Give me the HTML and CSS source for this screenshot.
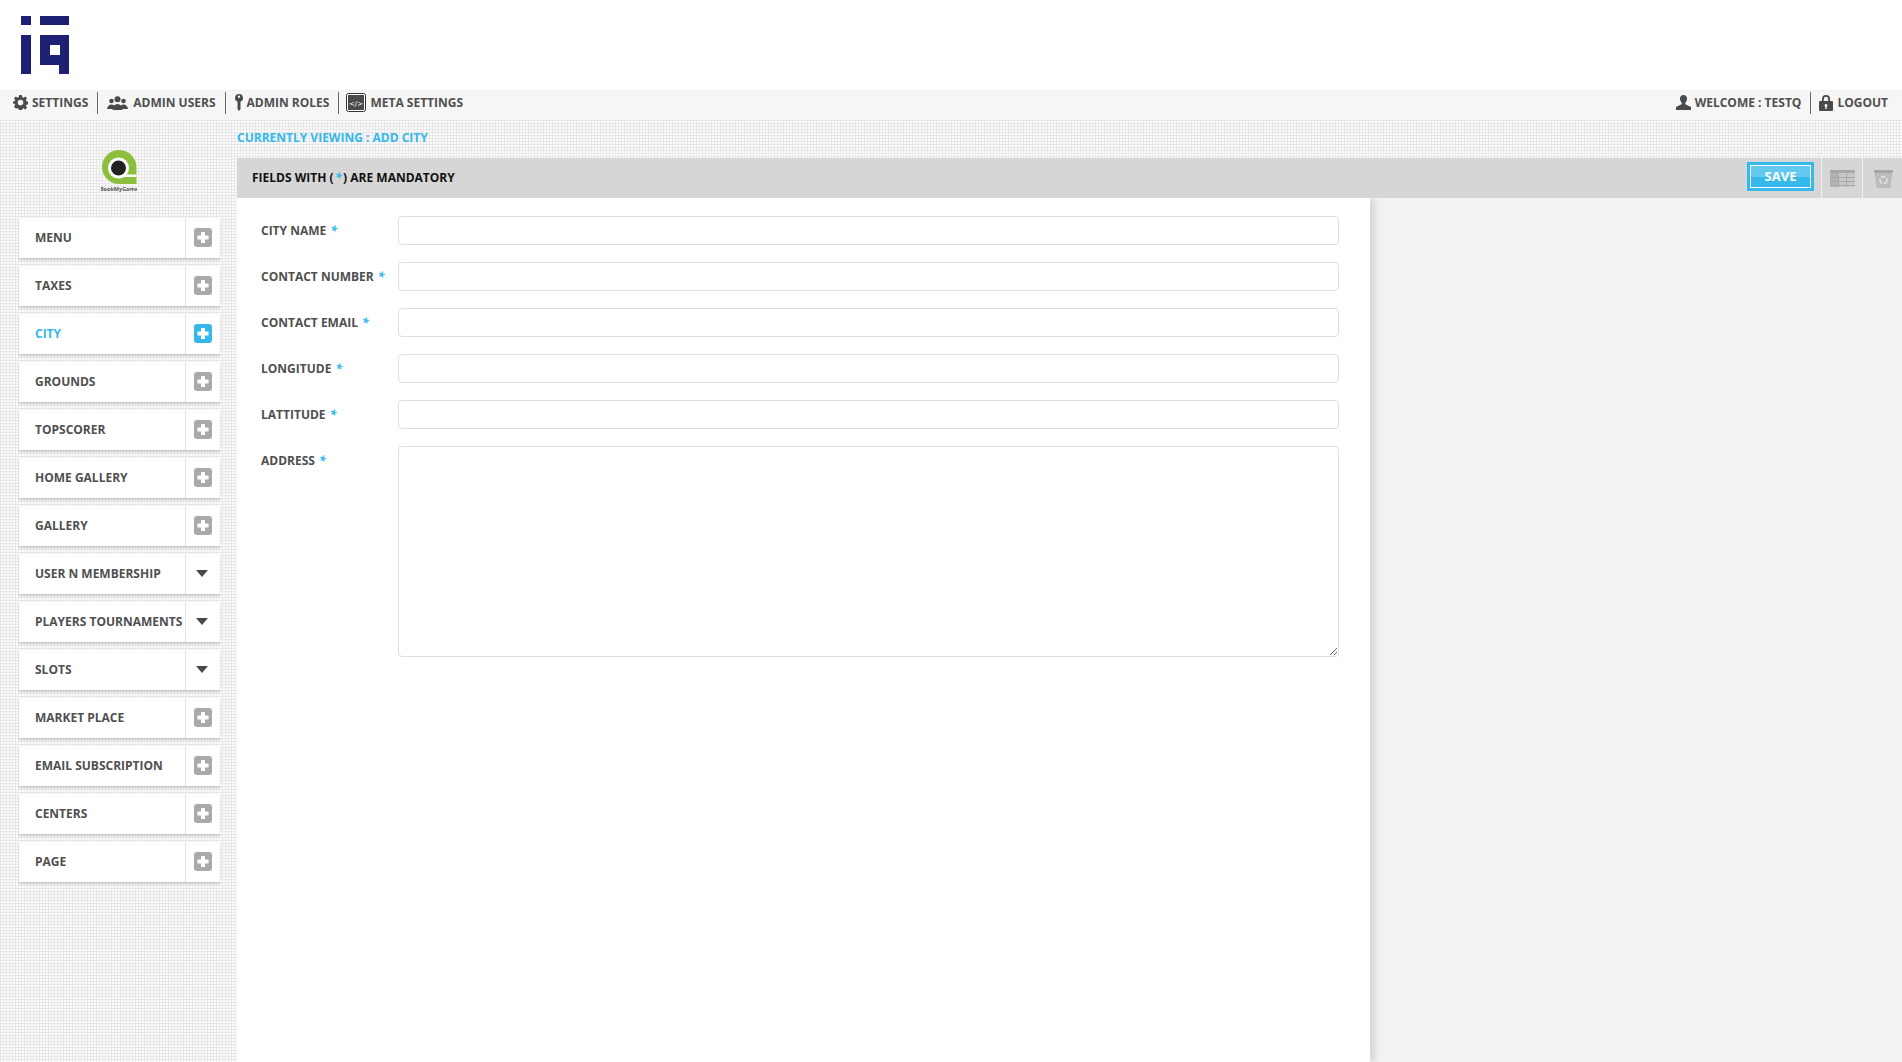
FILE: index.html
```html
<!DOCTYPE html>
<html lang="en">
<head>
<meta charset="utf-8">
<title>Add City</title>
<link rel="stylesheet" href="styles.css">
</head>
<body>
<svg width="0" height="0" class="defs">
  <symbol id="plus" viewBox="0 0 18 19"><rect width="18" height="19" rx="3" fill="currentColor"/><path d="M7 4h4v3.500h3.500v4H11V15H7v-3.500H3.500v-4H7z" fill="#fff"/></symbol>
  <symbol id="caret" viewBox="0 0 12 7"><path d="M0 0h12L6 7z" fill="#4a4a4a"/></symbol>
</svg>
<header class="brand">
  <svg class="brand-logo" width="48" height="58" viewBox="0 0 48 58"><path fill="#1e2074" d="M0 0h10v9H0zM19 0h29v9H19zM0 19h10v40H0zM19 19h29v40H38V49H19zM29 29v10h10V29z" fill-rule="evenodd"/></svg>
</header>
<nav class="topnav">
  <ul class="nav-group">
    <li class="nav-item"><svg width="15" height="15" viewBox="0 0 16 16"><path fill="#4a4a4a" fill-rule="evenodd" d="M6.600 0h2.800l.4 2.200 1.400.6L13 1.500l2 2-1.300 1.800.6 1.400 2.200.4v2.800l-2.200.4-.6 1.400 1.300 1.800-2 2-1.800-1.300-1.400.6-.4 2.200H6.600l-.4-2.200-1.400-.6L3 14.500l-2-2 1.300-1.800-.6-1.400L-.5 9V7l2.200-.4.600-1.400L1 3.500l2-2 1.800 1.300 1.400-.6zM8 5a3 3 0 1 0 0 6 3 3 0 0 0 0-6z"/></svg>SETTINGS</li>
    <li class="nav-item nav-item-users"><svg width="21" height="14" viewBox="0 0 21 14"><g fill="#4a4a4a"><circle cx="4.500" cy="5" r="2.300"/><circle cx="16.500" cy="5" r="2.300"/><path d="M0 13c.5-3 2-4.500 4.500-4.500S8 10 8 13zM13 13c0-3 1-4.500 3.500-4.500S20.500 10 21 13z"/><circle cx="10.500" cy="3.300" r="3"/><path d="M5.500 14c.5-4 2-6 5-6s4.500 2 5 6z"/></g></svg>ADMIN USERS</li>
    <li class="nav-item"><svg width="8" height="17" viewBox="0 0 8 17"><path fill="#4a4a4a" fill-rule="evenodd" d="M4 0a4 4 0 0 1 1.500 7.700V15L4 17l-1.500-2V7.700A4 4 0 0 1 4 0zm0 1.500a1.200 1.200 0 1 0 0 2.400 1.200 1.200 0 0 0 0-2.400z"/></svg>ADMIN ROLES</li>
    <li class="nav-item nav-item-code"><svg class="code-icon" width="20" height="19" viewBox="0 0 20 19"><rect x=".5" y=".5" width="19" height="18" rx="2" fill="#fff" stroke="#333"/><rect x="2" y="2" width="16" height="15" fill="#4a4a4a"/><text x="10" y="12.500" class="code-text">&lt;/&gt;</text></svg>META SETTINGS</li>
  </ul>
  <ul class="nav-group">
    <li class="nav-item"><svg width="15" height="15" viewBox="0 0 15 15"><path fill="#4a4a4a" d="M7.500 0c2.200 0 3.500 1.500 3.500 3.800 0 1.700-.8 3-1.700 3.900v1.500L15 12v3H0v-3l5.700-2.800V7.700C4.800 6.800 4 5.500 4 3.800 4 1.500 5.300 0 7.500 0z"/></svg>WELCOME : TESTQ</li>
    <li class="nav-item nav-item-logout"><svg width="14" height="16" viewBox="0 0 14 16"><path fill="#4a4a4a" fill-rule="evenodd" d="M3 6V4a4 4 0 0 1 8 0v2h2a1 1 0 0 1 1 1v8a1 1 0 0 1-1 1H1a1 1 0 0 1-1-1V7a1 1 0 0 1 1-1zm1.800 0h4.400V4a2.200 2.200 0 0 0-4.400 0zM7 9a1.500 1.500 0 0 0-.7 2.800V14h1.400v-2.200A1.500 1.500 0 0 0 7 9z"/></svg>LOGOUT</li>
  </ul>
</nav>
<div class="layout">
  <aside class="sidebar">
    <div class="client-logo">
      <svg width="36" height="42" viewBox="0 0 36 42"><path fill="#8dbf3f" d="M18 0a17.500 17.500 0 0 1 17.500 17.500V34H18a17 17 0 0 1 0-34z"/><circle cx="17.500" cy="18" r="10.500" fill="#fff"/><path fill="#fff" d="M18 24.500h17.500v2.500H18z"/><circle cx="17.500" cy="18" r="7.500" fill="#222"/><text x="18" y="40.500" class="client-text">BookMyGame</text></svg>
    </div>
    <ul class="menu">
      <li class="menu-item"><span class="menu-label">MENU</span><span class="menu-toggle"><svg width="18" height="19"><use href="#plus"/></svg></span></li>
      <li class="menu-item"><span class="menu-label">TAXES</span><span class="menu-toggle"><svg width="18" height="19"><use href="#plus"/></svg></span></li>
      <li class="menu-item is-active"><span class="menu-label">CITY</span><span class="menu-toggle"><svg width="18" height="19"><use href="#plus"/></svg></span></li>
      <li class="menu-item"><span class="menu-label">GROUNDS</span><span class="menu-toggle"><svg width="18" height="19"><use href="#plus"/></svg></span></li>
      <li class="menu-item"><span class="menu-label">TOPSCORER</span><span class="menu-toggle"><svg width="18" height="19"><use href="#plus"/></svg></span></li>
      <li class="menu-item"><span class="menu-label">HOME GALLERY</span><span class="menu-toggle"><svg width="18" height="19"><use href="#plus"/></svg></span></li>
      <li class="menu-item"><span class="menu-label">GALLERY</span><span class="menu-toggle"><svg width="18" height="19"><use href="#plus"/></svg></span></li>
      <li class="menu-item"><span class="menu-label">USER N MEMBERSHIP</span><span class="menu-toggle"><svg class="caret" width="12" height="7"><use href="#caret"/></svg></span></li>
      <li class="menu-item"><span class="menu-label">PLAYERS TOURNAMENTS</span><span class="menu-toggle"><svg class="caret" width="12" height="7"><use href="#caret"/></svg></span></li>
      <li class="menu-item"><span class="menu-label">SLOTS</span><span class="menu-toggle"><svg class="caret" width="12" height="7"><use href="#caret"/></svg></span></li>
      <li class="menu-item"><span class="menu-label">MARKET PLACE</span><span class="menu-toggle"><svg width="18" height="19"><use href="#plus"/></svg></span></li>
      <li class="menu-item"><span class="menu-label">EMAIL SUBSCRIPTION</span><span class="menu-toggle"><svg width="18" height="19"><use href="#plus"/></svg></span></li>
      <li class="menu-item"><span class="menu-label">CENTERS</span><span class="menu-toggle"><svg width="18" height="19"><use href="#plus"/></svg></span></li>
      <li class="menu-item"><span class="menu-label">PAGE</span><span class="menu-toggle"><svg width="18" height="19"><use href="#plus"/></svg></span></li>
    </ul>
  </aside>
  <main class="main">
    <div class="crumb">CURRENTLY VIEWING : ADD CITY</div>
    <div class="toolbar">
      <div class="toolbar-note">FIELDS WITH (<span class="req req-note">*</span>) ARE MANDATORY</div>
      <button class="save-btn" type="button"><span class="save-inner">SAVE</span></button>
      <div class="tool-cell"><svg width="25" height="17" viewBox="0 0 25 17"><rect width="25" height="17" fill="#c8c8c8"/><rect width="25" height="3" fill="#a8a8a8"/><rect y="3" width="8" height="14" fill="#b4b4b4"/><path stroke="#a8a8a8" d="M0 7.500h25M0 11.500h25M0 15.500h25M8.500 0v17M16.500 0v17" fill="none"/></svg></div>
      <div class="tool-cell tool-cell-trash"><svg width="19" height="18" viewBox="0 0 19 18"><path fill="#a6a6a6" d="M0 0h19v2.500h-1L16 18H3L1 2.500H0z"/><path fill="#bcbcbc" d="M1.500 3h16L16 18H3z"/><circle cx="9.500" cy="10" r="3.500" fill="none" stroke="#e4e4e4" stroke-width="1.500" stroke-dasharray="5 1.500"/></svg></div>
    </div>
    <div class="content">
      <form class="panel">
        <div class="field"><label class="field-label">CITY NAME <span class="req">*</span></label><input class="field-input" type="text"></div>
        <div class="field"><label class="field-label">CONTACT NUMBER <span class="req">*</span></label><input class="field-input" type="text"></div>
        <div class="field"><label class="field-label">CONTACT EMAIL <span class="req">*</span></label><input class="field-input" type="text"></div>
        <div class="field"><label class="field-label">LONGITUDE <span class="req">*</span></label><input class="field-input" type="text"></div>
        <div class="field"><label class="field-label">LATTITUDE <span class="req">*</span></label><input class="field-input" type="text"></div>
        <div class="field"><label class="field-label">ADDRESS <span class="req">*</span></label><textarea class="field-input field-area"></textarea></div>
      </form>
    </div>
  </main>
</div>
</body>
</html>
```
FILE: styles.css
```css
* { box-sizing: border-box; }
html, body { margin: 0; height: 100%; }
body {
  height: 1062px;
  overflow: hidden;
  display: flex;
  flex-direction: column;
  font-family: "Open Sans", "Liberation Sans", sans-serif;
  font-weight: 700;
  font-size: 12px;
  color: #4f4f4f;
  background-color: #fbfbfb;
  background-image:
    linear-gradient(#e8e8e8 1px, transparent 1px),
    linear-gradient(90deg, #e8e8e8 1px, transparent 1px);
  background-size: 3px 3px;
}
ul { list-style: none; margin: 0; padding: 0; }
.defs { position: absolute; }

.brand { height: 90px; flex: none; background: #fff; padding: 16px 0 0 21px; }
.brand-logo { display: block; }

.topnav {
  height: 30px;
  flex: none;
  display: flex;
  justify-content: space-between;
  align-items: flex-start;
  padding: 1px 5px 0 4px;
  background: #f6f6f6;
  border-top: 1px solid #f0f0f0;
}
.nav-group { display: flex; align-items: center; }
.nav-item {
  display: flex;
  align-items: center;
  gap: 4px;
  height: 22px;
  padding: 0 9px 1px;
  border-right: 1px solid #666;
  white-space: nowrap;
}
.nav-item:last-child { border-right: 0; }
.nav-item-users { gap: 5px; }
.nav-item-code { padding-left: 7px; }
.nav-item-logout { padding-left: 8px; }
.code-text { fill: #fff; font-size: 7px; font-weight: 400; text-anchor: middle; font-family: "DejaVu Sans", sans-serif; }

.layout { flex: 1; display: flex; min-height: 0; }
.sidebar { width: 237px; flex: none; padding: 30px 0 0 19px; }
.client-logo { height: 68px; padding-left: 82px; }
.client-logo svg { display: block; }
.client-text { font-size: 5.500px; font-weight: 700; fill: #555; text-anchor: middle; }

.menu { width: 201px; display: flex; flex-direction: column; gap: 8px; }
.menu-item {
  height: 40px;
  display: flex;
  background: #fff;
  box-shadow: 0 2px 2px #c9c9c9;
}
.menu-label { flex: 1; padding-left: 16px; line-height: 39px; white-space: nowrap; }
.menu-toggle {
  width: 35px;
  flex: none;
  display: flex;
  align-items: center;
  justify-content: center;
  color: #a9a9a9;
  border-left: 1px solid #e4e4e4;
  padding-bottom: 2px;
}
.menu-toggle svg { display: block; }
.menu-toggle .caret { margin-right: 2px; }
.is-active .menu-label { color: #35b8ea; }
.is-active .menu-toggle { color: #35b8ea; }

.main { flex: 1; display: flex; flex-direction: column; min-width: 0; }
.crumb { height: 38px; padding-top: 9px; line-height: 17px; color: #35b8ea; }
.toolbar {
  height: 40px;
  flex: none;
  display: flex;
  align-items: stretch;
  background: #d6d6d6;
}
.toolbar-note { flex: 1; padding-left: 15px; line-height: 39px; color: #111; }
.req { color: #35b8ea; font-style: italic; margin-left: 1px; }
.req-note { margin: 0 1.500px; }
.save-btn {
  align-self: flex-start;
  width: 67px;
  height: 29px;
  margin: 4px 7px 0 0;
  padding: 0;
  border: 3px solid #35b8ea;
  background: #35b8ea;
  font: inherit;
  font-size: 13px;
  color: #fff;
}
.save-inner {
  display: block;
  height: 100%;
  line-height: 20px;
  border: 1px solid #fff;
  background: linear-gradient(#63c9ef 50%, #35b8ea 50%);
}
.tool-cell {
  width: 41px;
  display: flex;
  align-items: center;
  justify-content: center;
  border-left: 1px solid #f0f0f0;
  padding-top: 1px;
}
.tool-cell-trash { width: 40px; padding-left: 2px; }

.content { flex: 1; min-height: 0; display: flex; background: #f2f2f2; }
.panel {
  width: 1133px;
  background: #fff;
  box-shadow: 7px 0 5px -1px #dadada;
  padding: 18px 31px 0 24px;
  display: flex;
  flex-direction: column;
  gap: 17px;
}
.field { display: flex; align-items: flex-start; }
.field-label { width: 137px; flex: none; line-height: 29px; white-space: nowrap; }
.field-input {
  flex: 1;
  height: 29px;
  min-width: 0;
  margin: 0;
  padding: 4px 8px;
  border: 1px solid #dedede;
  border-radius: 4px;
  background: #fff;
  font: inherit;
  display: block;
}
.field-area { height: 211px; }
```
